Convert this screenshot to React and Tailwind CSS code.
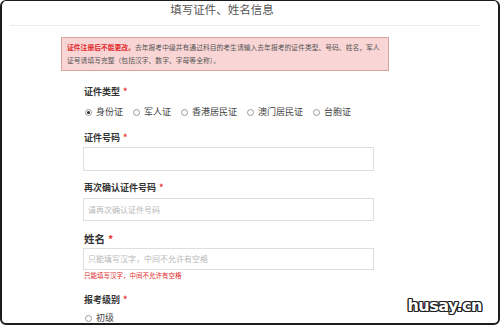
import React from 'react';

const font = { fontFamily: '"Noto Sans CJK SC", "Noto Sans", sans-serif' };

const Radio = ({ checked, label }) => (
  <label className="flex items-center gap-[4px]">
    <span className="flex h-[7px] w-[7px] items-center justify-center rounded-full border border-[#9a9a9a] bg-white">
      {checked && <span className="h-[3px] w-[3px] rounded-full bg-[#333]" />}
    </span>
    <span className="text-[9px] leading-[12px] text-[#444]">{label}</span>
  </label>
);

const Label = ({ children, className = '' }) => (
  <div className={`text-[9px] font-semibold leading-[12px] text-[#333] ${className}`}>
    {children}
    <span className="ml-[3px] text-[#e33]">*</span>
  </div>
);

const Field = ({ placeholder, className = '' }) => (
  <div
    className={`flex w-[291px] items-center border border-[#dedede] bg-white pl-[4px] text-[8px] text-[#b8b8b8] ${className}`}
  >
    {placeholder}
  </div>
);

export default function App() {
  const types = ['身份证', '军人证', '香港居民证', '澳门居民证', '台胞证'];

  return (
    <div
      className="relative h-[325px] w-[500px] overflow-hidden rounded-[6px] border-x-2 border-t border-b-2 border-[#1c1c1c] bg-white"
      style={font}
    >
      <header className="ml-[8px] mr-[18px] flex h-[25px] items-start justify-center border-b border-[#ececec] pr-[46px]">
        <h1 className="mt-[-1px] text-[11.5px] leading-[18px] text-[#555]">填写证件、姓名信息</h1>
      </header>

      <div className="ml-[59px] mt-[11px] w-[328px] border border-[#d6a3a3] bg-[#f9d5d5] px-[5px] py-[3px] text-[6.8px] leading-[13px] text-[#555]">
        <span className="font-semibold text-[#e02b2b]">证件注册后不能更改。</span>去年报考中级并有通过科目的考生请输入去年报考的证件类型、号码、姓名，军人证号请填写完整（包括汉字、数字、字母等全称）。
      </div>

      <main className="pl-[81px]">
        <Label className="mt-[15px] pl-[1px]">证件类型</Label>
        <div className="mt-[8px] flex items-center gap-[10px] pl-[2px]">
          {types.map((t, i) => (
            <Radio key={t} label={t} checked={i === 0} />
          ))}
        </div>

        <Label className="mt-[14px] pl-[1px]">证件号码</Label>
        <Field className="mt-[3px] h-[24px]" />

        <Label className="mt-[11px] pl-[1px]">再次确认证件号码</Label>
        <Field className="mt-[4px] h-[23px]" placeholder="请再次确认证件号码" />

        <div className="mt-[12px] pl-[1px] text-[10.5px] font-bold leading-[12px] text-[#333]">
          姓名<span className="ml-[3px] text-[#e33]">*</span>
        </div>
        <Field className="mt-[3px] h-[22px]" placeholder="只能填写汉字，中间不允许有空格" />
        <div className="pl-[1px] text-[6.5px] leading-[10px] text-[#e02b2b]">只能填写汉字，中间不允许有空格</div>

        <Label className="mt-[14px] pl-[1px]">报考级别</Label>
        <div className="mt-[6px] flex pl-[2px]">
          <Radio label="初级" />
        </div>
      </main>

      <div
        className="absolute bottom-[8px] right-[16px] text-[16px] font-bold leading-[18px] tracking-[-0.5px] text-white [text-shadow:1.2px_0_0_#222,-1.2px_0_0_#222,0_1.2px_0_#222,0_-1.2px_0_#222,1px_1px_0_#222,-1px_-1px_0_#222,1px_-1px_0_#222,-1px_1px_0_#222]"
        style={{ fontFamily: '"DejaVu Sans", sans-serif' }}
      >
        husay.cn
      </div>
    </div>
  );
}
